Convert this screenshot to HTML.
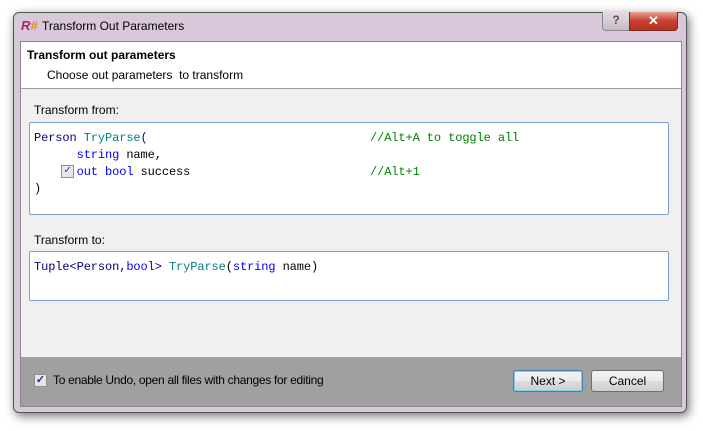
<!DOCTYPE html>
<html><head><style>
body{margin:0;width:703px;height:431px;background:#fff;position:relative;overflow:hidden;font-family:"Liberation Sans",sans-serif;}
.win{position:absolute;left:13px;top:12px;width:672px;height:399px;background:#d9c8d9;border:1px solid #555;border-radius:6px;box-shadow:2px 3px 10px rgba(0,0,0,.55);}
.title{position:absolute;left:42px;top:19px;font-size:12px;color:#000;}
.client{position:absolute;left:20px;top:41px;width:660px;height:364px;background:#f0f0f0;border:1px solid #888;}
.hdr{position:absolute;left:0;top:0;width:660px;height:46px;background:#fff;border-bottom:1px solid #a0a0a0;}
.mono{font-family:"Liberation Mono",monospace;font-size:12px;letter-spacing:-0.1px;}
.box{position:absolute;background:#fff;border:1px solid #7aa0cc;border-radius:2px;}
.kw{color:#0000ff}.ty{color:#008080}.cm{color:#008000}.tx{color:#000080}
.foot{position:absolute;left:0;top:315px;width:660px;height:49px;background:#a0a0a0;}
.btn{position:absolute;top:13px;height:20px;border:1px solid #707070;border-radius:3px;background:linear-gradient(#f2f2f2,#ebebeb 50%,#dddddd 51%,#cfcfcf);font-size:12px;text-align:center;line-height:20px;}
.cb{position:absolute;width:11px;height:11px;border:1px solid #8f8f8f;background:#e6e6ee;font-size:11px;font-weight:bold;line-height:11px;text-align:center;color:#2a2a8a;}
</style></head><body>
<div class="win"></div>
<div style="position:absolute;left:21px;top:18px;font-weight:bold;font-size:13px;color:#b0207a;font-style:italic;">R<span style="color:#e09020">#</span></div>
<div class="title">Transform Out Parameters</div>
<div style="position:absolute;left:602px;top:12px;width:26px;height:18px;border:1px solid #888;border-top:none;border-radius:0 0 0 4px;background:linear-gradient(#e6dbe6,#c8bac8);font-size:12px;font-weight:bold;text-align:center;line-height:17px;color:#555;">?</div>
<div style="position:absolute;left:629px;top:12px;width:47px;height:18px;border:1px solid #7a2a20;border-top:none;border-radius:0 0 4px 0;background:linear-gradient(#e9a090,#c84030 50%,#b83020);color:#fff;font-weight:bold;font-size:13px;text-align:center;line-height:17px;">✕</div>
<div class="client">
 <div class="hdr">
  <div style="position:absolute;left:6px;top:6px;font-size:12px;font-weight:bold;">Transform out parameters</div>
  <div style="position:absolute;left:26px;top:26px;font-size:12px;">Choose out parameters&nbsp; to transform</div>
 </div>
 <div style="position:absolute;left:13px;top:61px;font-size:12px;">Transform from:</div>
 <div class="box mono" style="left:8px;top:80px;width:638px;height:91px;">
  <div style="position:absolute;left:4px;top:7px;white-space:pre;line-height:17px;"><span class="tx">Person</span> <span class="ty">TryParse</span><span class="tx">(</span>
      <span class="kw">string</span> name,
      <span class="kw">out</span> <span class="kw">bool</span> success
)</div>
  <div style="position:absolute;left:340px;top:7px;white-space:pre;line-height:17px;" class="cm">//Alt+A to toggle all

//Alt+1</div>
  <div class="cb" style="left:31px;top:42px;">✓</div>
 </div>
 <div style="position:absolute;left:13px;top:191px;font-size:12px;">Transform to:</div>
 <div class="box mono" style="left:8px;top:209px;width:638px;height:48px;">
  <div style="position:absolute;left:4px;top:8px;white-space:pre;"><span class="tx">Tuple&lt;Person,</span><span class="kw">bool</span><span class="tx">&gt;</span> <span class="ty">TryParse</span>(<span class="kw">string</span> name)</div>
 </div>
 <div class="foot">
  <div class="cb" style="left:13px;top:17px;">✓</div>
  <div style="position:absolute;left:32px;top:16px;font-size:12px;letter-spacing:-0.3px;">To enable Undo, open all files with changes for editing</div>
  <div class="btn" style="left:492px;width:68px;border-color:#3c7fb1;box-shadow:inset 0 0 0 1px #7fd0f0;">Next &gt;</div>
  <div class="btn" style="left:570px;width:71px;">Cancel</div>
 </div>
</div>
</body></html>
